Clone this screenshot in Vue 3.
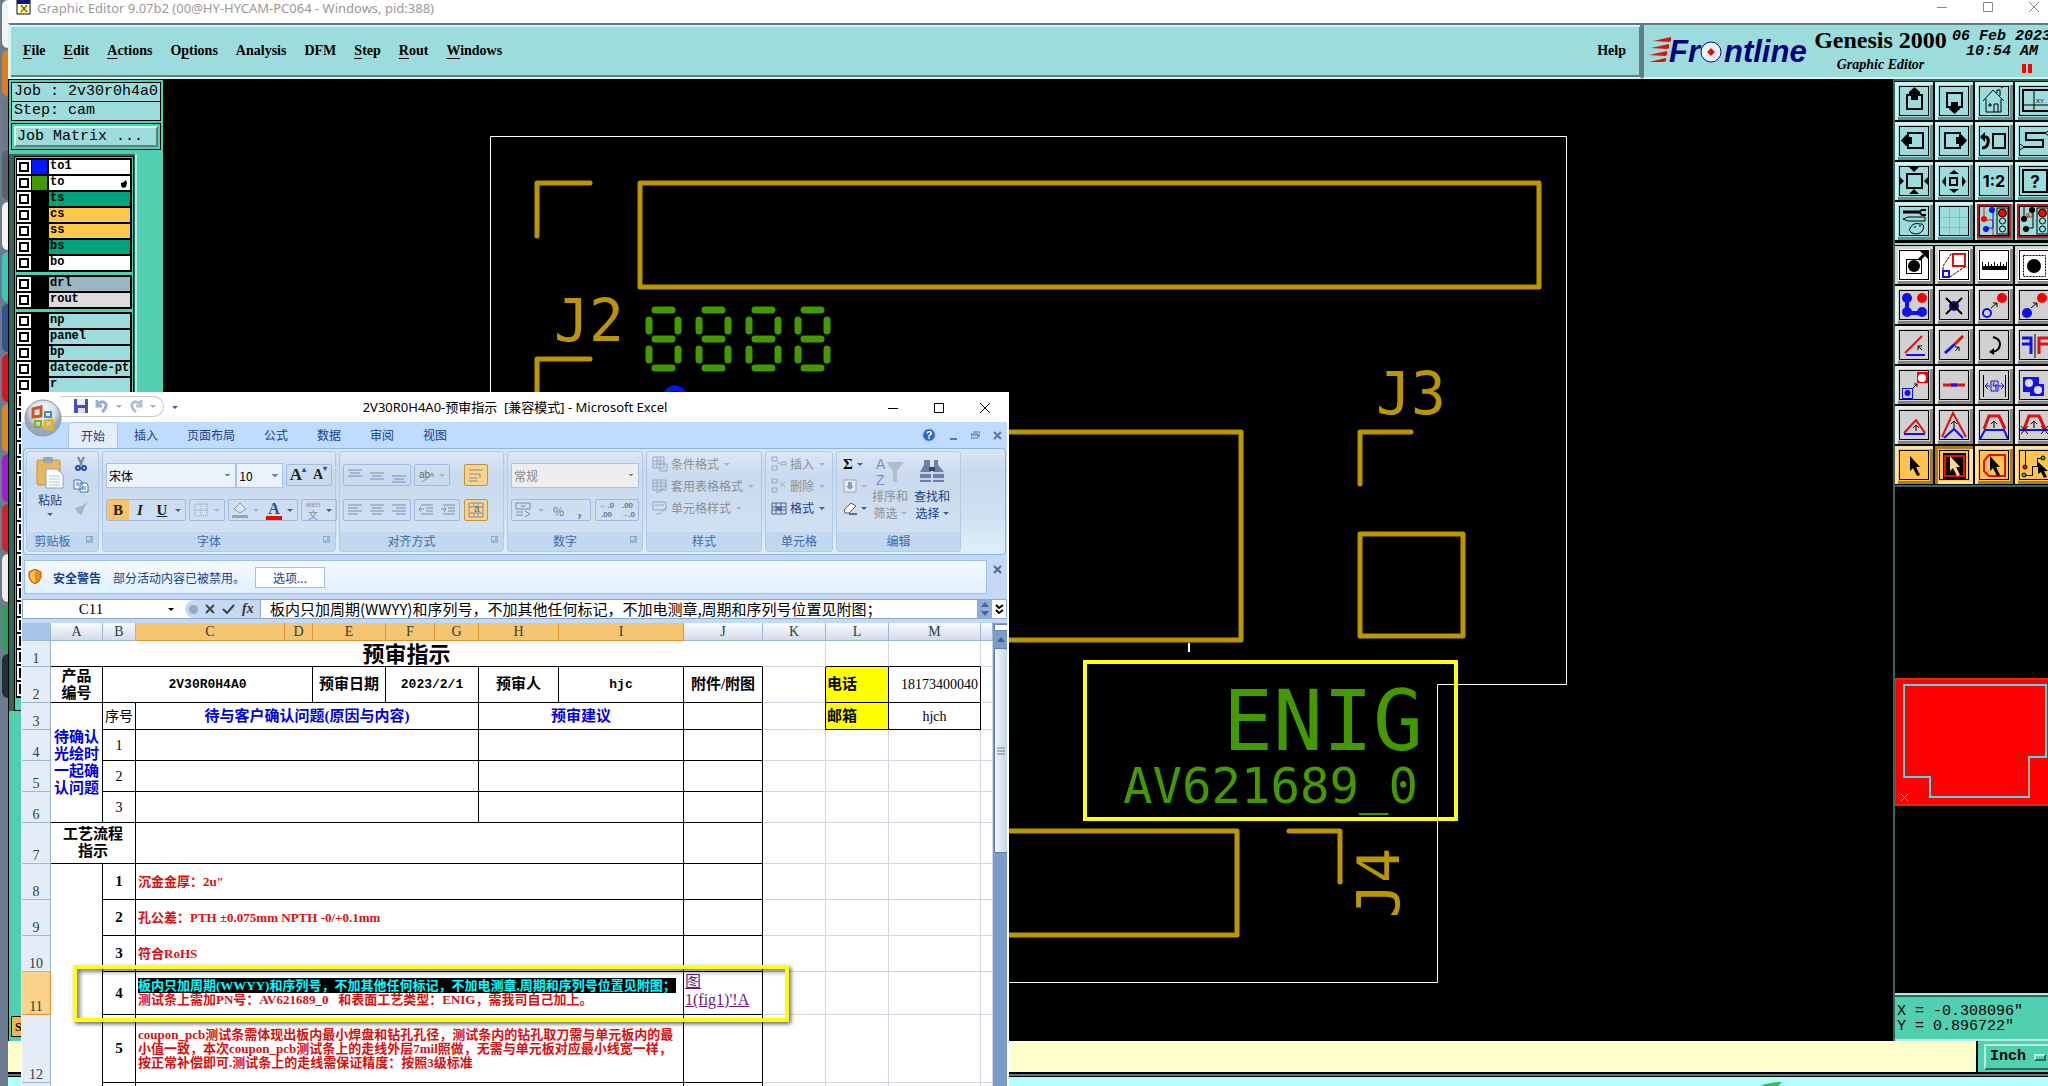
<script setup>
const menus = [
  ['F', 'ile', ''], ['E', 'dit', ''], ['A', 'ctions', ''], ['p', 'tions', 'O'], ['', 'Analysis', ''],
  ['', 'DFM', ''], ['S', 'tep', ''], ['R', 'out', ''], ['W', 'indows', ''],
]

const strip = [
  ['#f4f4f4', 48], ['#dd7f1c', 46], ['#6f7683', 50], ['#59636b', 50], ['#f3f3f3', 48], ['#35c9b9', 50],
  ['#34508f', 48], ['#d8161f', 48], ['#d98a1c', 48], ['#a11cd0', 48], ['#cf2430', 48], ['#f0eee8', 48],
  ['#2f9e63', 48], ['#20303a', 44],
]

const white = '#ffffff', green = '#00a47c', amber = '#ffc64c', aqua = '#9cdcdc'
const layerGroups = [
  [
    { n: 'to1', bg: white, c: '#0018ff' }, { n: 'to', bg: white, c: '#449900', hand: true },
    { n: 'ts', bg: green }, { n: 'cs', bg: amber }, { n: 'ss', bg: amber }, { n: 'bs', bg: green }, { n: 'bo', bg: white },
  ],
  [{ n: 'drl', bg: '#9cb6be' }, { n: 'rout', bg: '#dcdcdc' }],
  [
    { n: 'np', bg: aqua }, { n: 'panel', bg: aqua }, { n: 'bp', bg: aqua }, { n: 'datecode-pto', bg: aqua }, { n: 'r', bg: aqua },
    ...Array.from({ length: 19 }, () => ({ n: '', bg: aqua })),
  ],
]

const K = 'fill="none" stroke="#000" stroke-width="2"'
const T = 'fill="none" stroke="#000"'
const R = 'fill="none" stroke="#e01010" stroke-width="2"'
const B = 'fill="none" stroke="#1010f0" stroke-width="2"'
const light = (ink) => `
  <rect x="22" y="6" width="11" height="26" ${T}/><circle cx="27.5" cy="11" r="4" fill="#f00" stroke="#000"/>
  <circle cx="27.5" cy="19" r="3" ${T}/><circle cx="27.5" cy="27" r="3" ${T}/>
  <path d="M18 8V26H12" fill="none" stroke="${ink}"/><circle cx="17" cy="8" r="3" fill="${ink}"/>
  <circle cx="11" cy="27" r="3" fill="${ink}"/>`
const pointer = 'M15 10V25L18 22L22 30L25 29L21 21H25Z'

const viewTools = [
  { t: 'Pan up', s: `<rect x="12" y="13" width="15" height="14" ${K}/><path d="M19.5 5L25 10V13H23V18H16V13H14V10Z"/>` },
  { t: 'Pan down', s: `<rect x="12" y="11" width="15" height="14" ${K}/><path d="M19.5 32L25 27V25H23V20H16V25H14V27Z"/>` },
  { t: 'Home', s: `<path d="M8 19L18 8L29 19M11 17V30H26V17M14 22H16V24H14ZM19 30V22H23V30M22 11V8H25V14M26 6L28 5" ${T}/>` },
  { t: 'Window XY', s: `<rect x="8" y="8" width="26" height="21" ${K}/><path d="M19 8V29M8 23H34" ${T}/><text x="21" y="21" font-size="6" font-family="Liberation Sans">XY</text>` },
  { t: 'Pan left', s: `<rect x="13" y="11" width="15" height="15" ${K}/><path d="M6 18.5L11 13H12V15H17V22H12V24H11Z"/>` },
  { t: 'Pan right', s: `<rect x="10" y="11" width="15" height="15" ${K}/><path d="M32 18.5L27 13H26V15H21V22H26V24H27Z"/>` },
  { t: 'Previous view', s: `<rect x="18" y="12" width="12" height="14" ${K}/><path d="M8 15H11Q14 16 13 21Q12 26 7 26" fill="none" stroke="#000" stroke-width="3"/><path d="M5 15L10 10V20Z"/>` },
  { t: 'Serpentine', s: `<path d="M8 25H28V18H11V11H30" ${K}/><path d="M5 22L9 25L5 28M35 8L30 11L34 14" ${T}/>` },
  { t: 'Zoom in', s: `<rect x="12" y="12" width="15" height="14" ${K}/><path d="M14 5H24L19 10ZM14 32H24L19 27ZM4 14V24L9 19ZM34 14V24L29 19Z"/>` },
  { t: 'Zoom out', s: `<rect x="15" y="16" width="7" height="7" ${K}/><path d="M19 8L24 12H14ZM19 31L24 27H14ZM7 19.5L11 14V25ZM31 19.5L27 14V25Z"/>` },
  { t: 'Scale', s: `<text x="19" y="25" text-anchor="middle" font-size="16" font-weight="bold" font-family="Inter">1:2</text>` },
  { t: 'Query', s: `<rect x="8" y="8" width="24" height="22" ${K}/><text x="20" y="26" text-anchor="middle" font-size="17" font-weight="bold" font-family="Inter">?</text>` },
  { t: 'Settings', s: `<path d="M8 10H24" stroke="#000" stroke-width="3"/><path d="M31 8H27L24 10L27 13H31" ${K}/><path d="M8 17L13 15H30V19H13ZM15 26Q18 20 25 22Q30 21 28 28Q24 34 17 31Q13 29 15 26M19 25H21M24 24H26" ${T}/>` },
  { t: 'Grid', s: `<path d="M14.5 5V33M24.5 5V33M5 15.5H33M5 25.5H33" fill="none" stroke="#b9a6b0"/>` },
  { t: 'Net check', c: 'hot', s: `<path d="M9 4V18H18V33" fill="none" stroke="#e01010"/><circle cx="9" cy="17" r="3" fill="#f00"/>${light('#1010f0')}` },
  { t: 'Online check', c: 'hot', s: `<path d="M9 15H17M12 11V15M14 11V15M17 11V15" fill="none" stroke="#e01010"/><path d="M9 5V18" ${T}/><circle cx="9" cy="17" r="3"/>${light('#000')}` },
]
const editTools = [
  { t: 'Select', c: 'w', s: `<rect x="11.5" y="13.5" width="15" height="14" ${T}/><circle cx="19" cy="20" r="6"/><path d="M24 14L29 9" stroke="#000" stroke-width="3"/><path d="M25 5H33V13Z"/>` },
  { t: 'Resize', c: 'w', s: `<rect x="18" y="8" width="12" height="12" ${R}/><rect x="8" y="25" width="6" height="6" ${B}/><path d="M8 24V20L17 7M15 31L31 20" ${T} stroke-dasharray="3 1"/>` },
  { t: 'Measure', c: 'w', s: `<path d="M7 24V16H8V20H10V18H11V20H13V16H14V20H16V18H17V20H19V16H20V20H22V18H23V20H25V16H26V20H28V18H29V20H31V16H32V24Z"/>` },
  { t: 'Area', c: 'w', s: `<rect x="8.5" y="9.5" width="22" height="21" ${T} stroke-dasharray="2 1"/><circle cx="19" cy="20" r="7"/>` },
  { t: 'Add pad', s: `<path d="M12 11V27H26" fill="none" stroke="#11e" stroke-width="4"/><circle cx="12" cy="12" r="5" fill="#11e"/><circle cx="12" cy="26" r="5" fill="#11e"/><circle cx="27" cy="26" r="5" fill="#11e"/><circle cx="27" cy="12" r="5" fill="#f00"/>` },
  { t: 'Delete', s: `<circle cx="19" cy="20" r="5" fill="#11a"/><path d="M11 12L27 28M27 12L11 28" ${K}/>` },
  { t: 'Move', s: `<circle cx="12" cy="27" r="4" ${B}/><circle cx="27" cy="12" r="5" fill="#f00"/><path d="M16 22L22 17M18 17H22V21" ${T}/>` },
  { t: 'Copy', s: `<circle cx="12" cy="27" r="5" fill="#11e"/><circle cx="27" cy="12" r="5" fill="#f00"/><path d="M16 22L22 17M18 17H22V21" ${T}/>` },
  { t: 'Angle', s: `<path d="M10 27L27 10" ${R}/><path d="M11 29H30" ${B}/><path d="M27 24L23 20M23 24V20H27" ${T}/>` },
  { t: 'Line', s: `<path d="M20 18L28 10" stroke="#e01010" stroke-width="3"/><path d="M10 27L20 18" stroke="#11e" stroke-width="3"/><path d="M20 25L24 21M20 21H24V25" ${T}/>` },
  { t: 'Rotate', s: `<path d="M18 11Q25 13 25 18Q25 24 18 26" ${K}/><path d="M14 26L19 22V29Z"/>` },
  { t: 'Mirror', s: `<path d="M7 12H16V28M7 18H16" fill="none" stroke="#11e" stroke-width="3"/><path d="M33 12H24V28M33 18H24" fill="none" stroke="#e01010" stroke-width="3"/><path d="M20 8V32" ${T}/>` },
  { t: 'Substitute', s: `<rect x="22" y="6" width="11" height="11" fill="#f00"/><circle cx="27" cy="12" r="4" fill="#fff"/><rect x="7.5" y="22.5" width="10" height="10" fill="none" stroke="#11e"/><circle cx="12.5" cy="27" r="3" fill="#11e"/><path d="M18 22L22 18M19 18H22V21" ${T}/>` },
  { t: 'Connect', s: `<path d="M8 19H30" stroke="#e01010" stroke-width="3"/><path d="M16 19H22" stroke="#11e" stroke-width="3"/>` },
  { t: 'Spacing', s: `<path d="M8.5 9V31M30.5 9V31" ${T}/><path d="M10 20H15M29 20H23M13 17L10 20L13 23M26 17L29 20L26 23M16 15H23V25H16ZM19 16L18 20H22M21 18V24" fill="none" stroke="#11e"/>` },
  { t: 'Surface', s: `<path d="M8 11H24V18H29V30H15V26H8Z" fill="#11e"/><circle cx="14" cy="17" r="4" fill="#ddd"/><circle cx="23" cy="24" r="4" fill="#ddd"/>` },
  { t: 'Triangle', s: `<path d="M9 27L21 14L30 27" ${R}/><path d="M9 28H30" ${B}/><path d="M21 25V19M18 22L21 19L24 22" ${T}/>` },
  { t: 'Peak', s: `<path d="M7 31L18 7L31 31" ${R}/><path d="M9 32L19 23L28 32" ${B}/><path d="M19 22V15M16 18L19 15L22 18" ${T}/>` },
  { t: 'Bridge', s: `<path d="M9 23L14 10H24L30 23" fill="none" stroke="#e01010" stroke-width="3"/><path d="M5 33L10 24H29L33 33" ${B}/><path d="M19 22V15M16 18L19 15L22 18" ${T}/>` },
  { t: 'Bridge cut', s: `<path d="M9 23L14 10H24L30 23" fill="none" stroke="#e01010" stroke-width="3"/><path d="M5 24H33" ${B}/><path d="M6 20L13 28M13 20L6 28M26 20L33 28M33 20L26 28M19 22V15M16 18L19 15L22 18" ${T}/>` },
  { t: 'Pick', c: 'y', s: `<path d="${pointer}"/>` },
  { t: 'Pick in frame', c: 'y on', s: `<rect x="8" y="7" width="23" height="26"/><rect x="10" y="10" width="19" height="20" ${R}/><path d="${pointer}" fill="#ffd98a"/>` },
  { t: 'Pick polygon', c: 'y', s: `<path d="M9 15L14 9H30V30H14L9 25Z" ${R}/><path d="${pointer}"/>` },
  { t: 'Pick net', c: 'y', s: `<path d="M10.5 5V20M10 29.5H17.5V20.5H22.5V12.5H28" ${T}/><circle cx="10" cy="21" r="2" fill="#f00" stroke="#000"/><circle cx="9" cy="29" r="2" fill="#3c3" stroke="#000"/><circle cx="28" cy="12" r="2" fill="#3c3" stroke="#000"/><path transform="translate(8 6)" d="M15 10V22L18 20L21 26L24 25L21 19H25Z"/>` },
]

const digits = [0, 50, 100, 149]
const tabs = ['开始', '插入', '页面布局', '公式', '数据', '审阅', '视图']
const cols = [
  ['A', 52], ['B', 33], ['C', 149], ['D', 28], ['E', 73], ['F', 49], ['G', 44],
  ['H', 80], ['I', 125], ['J', 79], ['K', 63], ['L', 63], ['M', 92], ['', 12],
]
const alignTop = ['M3 5H17M5 8H15M3 11H17', 'M3 8H17M5 11H15M3 14H17', 'M3 11H17M5 14H15M3 17H17']
const alignText = ['M3 5H17M3 8H13M3 11H17M3 14H13', 'M3 5H17M5 8H15M3 11H17M5 14H15', 'M3 5H17M7 8H17M3 11H17M7 14H17']
const indent = ['M5 5H17M10 8H17M10 11H17M5 14H17M8 9H3M5 7L3 9L5 12', 'M5 5H17M10 8H17M10 11H17M5 14H17M3 9H8M6 7L8 9L6 12']
</script>

<template>
  <div class="desktop">
    <aside class="dock">
      <i v-for="(s, i) in strip" :key="i" :style="{ background: s[0], height: s[1] + 'px' }"></i>
    </aside>

    <section class="genesis">
      <header class="gtitle">
        <svg class="gico" viewBox="0 0 15 15"><rect x="1" y="0" width="13" height="14" fill="#fff" stroke="#111" /><rect x="1" y="0" width="13" height="4" fill="#117" /><rect x="4" y="5" width="8" height="8" fill="#ffee70" /><path d="M5 5L11 12M11 5L5 12" stroke="#222" /></svg>
        <span>Graphic Editor 9.07b2 (00@HY-HYCAM-PC064 - Windows, pid:388)</span>
        <div class="caps">
          <button aria-label="Minimize"><svg viewBox="0 0 12 12"><path d="M1 6.5H11" /></svg></button>
          <button aria-label="Maximize"><svg viewBox="0 0 12 12"><path d="M1.5 1.5H10.5V10.5H1.5Z" /></svg></button>
          <button aria-label="Close"><svg viewBox="0 0 12 12"><path d="M1 1L11 11M11 1L1 11" /></svg></button>
        </div>
      </header>

      <div class="top">
        <nav class="menubar">
          <button v-for="m in menus" :key="m[1]">{{ m[2] }}<u>{{ m[0] }}</u>{{ m[1] }}</button>
          <button class="help">Help</button>
        </nav>
        <div class="brand">
          <svg class="logo" width="164" height="38" viewBox="0 0 164 38">
            <path d="M4 7L22 3V7L20 8ZM2 14L20 10V14L18 15ZM0 21L18 17V21L16 22ZM0 28L17 24V27L15 28Z" fill="#e01010" />
            <text x="20" y="28" class="lg">Fr</text>
            <circle cx="62" cy="18" r="10" fill="#e8f4fa" stroke="#101080" />
            <path d="M62 14L66 18L62 22L58 18Z" fill="#e01010" />
            <text x="75" y="28" class="lg">ntline</text>
          </svg>
          <div class="prod"><b>Genesis 2000</b><em>Graphic Editor</em></div>
          <div class="date"><span>06 Feb 2023</span><span class="tm">10:54 AM</span><svg width="10" height="9"><path d="M0 0H4V9H0ZM6 0H10V9H6Z" fill="#f00" /></svg></div>
        </div>
      </div>

      <div class="work">
        <aside class="left">
          <div class="job">Job : 2v30r0h4a0</div>
          <div class="job step">Step: cam</div>
          <div class="jm"><button>Job Matrix ...</button></div>
          <div class="layers">
            <div class="list">
              <div v-for="(g, gi) in layerGroups" :key="gi" class="lgrp">
                <div v-for="(l, li) in g" :key="li" class="layer">
                  <input type="checkbox" :aria-label="l.n || 'layer'" />
                  <i :style="{ background: l.c || '#000' }"></i>
                  <span :style="{ background: l.bg }">{{ l.n }}<svg v-if="l.hand" width="7" height="8"><path d="M0 3L3 2L5 0L6 3L5 7L2 8L0 6Z" /></svg></span>
                </div>
              </div>
            </div>
          </div>
          <button class="sbtn">S</button>
        </aside>

        <main class="canvas">
          <svg class="board" viewBox="163 79 1730 962" preserveAspectRatio="xMinYMin slice">
            <g fill="none" stroke="#fff"><path d="M490.5 400V136.5H1566.5V684.5H1437.5V982.5H1000" /><path d="M1189 643V652" stroke-width="2" /></g>
            <g fill="none" stroke="#ba9600" stroke-width="5" stroke-linecap="round" stroke-linejoin="round">
              <path d="M537 236V183H590M537 400V359H590M640 183H1539V287H640ZM1360 484V432H1411M1360 534H1463V636H1360ZM1000 432H1241V640H1000M1000 831H1237V935H1000M1289 831H1340V882" />
            </g>
            <g class="cad gold">
              <text x="554" y="341">J2</text><text x="1376" y="414">J3</text><text transform="translate(1399 918) rotate(-90)">J4</text>
            </g>
            <g stroke="#449900" stroke-width="7" stroke-linecap="round" fill="none">
              <path v-for="d in digits" :key="d" :transform="`translate(${d} 0)`" d="M655 310H672M655 339H672M655 368H672M649 320V331M678 320V331M649 349V360M678 349V360" />
            </g>
            <circle cx="675" cy="398" r="10" fill="none" stroke="#0018ff" stroke-width="5" />
            <g class="cad grn"><text class="big" x="1423" y="750" text-anchor="end">ENIG</text><text class="part" x="1418" y="803" text-anchor="end">AV621689_0</text></g>
            <rect x="1085" y="662" width="371" height="157" fill="none" stroke="#ff1" stroke-width="4" />
          </svg>
        </main>

        <aside class="right">
          <div class="tools"><button v-for="b in viewTools" :key="b.t" :class="b.c" :title="b.t" :aria-label="b.t"><svg viewBox="0 0 38 38"><rect x="4.5" y="4.5" width="29" height="29" fill="none" stroke="#000" /><g v-html="b.s"></g></svg></button></div>
          <div class="tools edit"><button v-for="b in editTools" :key="b.t" :class="b.c" :title="b.t" :aria-label="b.t"><svg viewBox="0 0 38 38"><rect x="4.5" y="4.5" width="29" height="29" fill="none" stroke="#000" /><g v-html="b.s"></g></svg></button></div>
          <div class="over">
            <svg width="156" height="128" viewBox="0 0 156 128"><rect width="156" height="128" fill="#f00" /><path d="M156 1H0V127H156" fill="none" stroke="#b05c10" /><path d="M9 7H151V79H134V119H35V99H9Z" fill="none" stroke="#4adcdc" stroke-width="2" /><path d="M134 80V118" stroke="#aaa" stroke-width="2" /><path d="M6 116L13 123M13 116L6 123" stroke="#ccc" /></svg>
          </div>
          <div class="coord"><span>X = -0.308096"</span><span>Y = 0.896722"</span></div>
        </aside>
      </div>

      <footer class="cmd">
        <input aria-label="Command" />
        <div class="unit"><button>Inch<i></i></button></div>
      </footer>
      <div class="foot"><svg width="24" height="4"><path d="M0 4Q10 0 22 0L18 4Z" fill="#3fbf4a" /></svg></div>
    </section>

    <section class="excel">
      <header class="xtitle">
        <svg class="orb" width="38" height="38" viewBox="0 0 38 38">
          <defs><radialGradient id="o" cy=".3"><stop offset="0" stop-color="#fff" /><stop offset=".7" stop-color="#d5dce6" /><stop offset="1" stop-color="#9aa8bb" /></radialGradient></defs>
          <circle cx="19" cy="19" r="18" fill="url(#o)" stroke="#8695aa" />
          <g fill="none" stroke-width="3"><path d="M9 10L17 8V17L9 18Z" stroke="#d8501c" /><path d="M21 13H27V18H21Z" stroke="#3e8fd0" stroke-width="2" /><path d="M11 22H17V28H11Z" stroke="#7db32d" stroke-width="2" /><path d="M21 22L28 21V30L21 29Z" stroke="#efb310" /></g>
        </svg>
        <div class="qat">
          <button aria-label="Save"><svg width="14" height="14"><path d="M0 0H14V14H0Z" fill="#4a4fb5" /><path d="M3 0H11V6H3Z" fill="#eef" /><path d="M4 9H11V14H4Z" fill="#dde" /></svg></button>
          <button aria-label="Undo"><svg width="14" height="14" fill="none" stroke="#9aaed0" stroke-width="3"><path d="M2 1V7H7M2 6Q8 0 11 5Q12 9 7 13" /></svg></button><s></s>
          <button aria-label="Redo"><svg width="14" height="14" fill="none" stroke="#b3bfd4" stroke-width="3"><path d="M12 1V7H7M12 6Q6 0 3 5Q2 9 7 13" /></svg></button><s></s>
        </div>
        <s class="more"></s>
        <h1>2V30R0H4A0-预审指示&nbsp; [兼容模式] - Microsoft Excel</h1>
        <div class="caps dark">
          <button aria-label="Minimize"><svg viewBox="0 0 12 12"><path d="M1 6.5H11" /></svg></button>
          <button aria-label="Maximize"><svg viewBox="0 0 12 12"><path d="M1.5 1.5H10.5V10.5H1.5Z" /></svg></button>
          <button aria-label="Close"><svg viewBox="0 0 12 12"><path d="M1 1L11 11M11 1L1 11" /></svg></button>
        </div>
      </header>

      <nav class="tabs">
        <button v-for="(t, i) in tabs" :key="t" :class="{ act: i === 0 }">{{ t }}</button>
        <div class="tr">
          <svg width="14" height="14"><circle cx="7" cy="7" r="6" fill="#2f62c8" stroke="#7fa2dd" /><text x="7" y="11" text-anchor="middle" font-size="11" font-weight="bold" fill="#fff">?</text></svg>
          <svg width="9" height="12"><path d="M1 10H8" stroke="#66768c" stroke-width="2" /></svg>
          <svg width="9" height="12"><path d="M2 3H9V7H7M0 5H7V9H0ZM0 6H7" fill="none" stroke="#66768c" /></svg>
          <svg width="9" height="12"><path d="M1 3L8 10M8 3L1 10" stroke="#66768c" stroke-width="2" /></svg>
        </div>
      </nav>

      <div class="ribbon">
        <div class="grp clip">
          <div class="body">
            <button class="tall"><svg width="28" height="32"><rect x="1" y="3" width="23" height="25" rx="2" fill="#e8b860" stroke="#c79036" /><rect x="7" y="0" width="10" height="6" rx="2" fill="#9aa3b0" /><path d="M10 12H21L27 18V31H10Z" fill="#fff" stroke="#8aa0c0" /><path d="M13 19H24M13 22H24M13 25H24M13 28H24" stroke="#b3c3dd" /></svg><span>粘贴</span><s></s></button>
            <div class="stack">
              <button aria-label="Cut"><svg width="16" height="16" fill="none"><path d="M5 1L9 9M11 1L7 9" stroke="#77859c" stroke-width="2" /><circle cx="5" cy="12" r="2" stroke="#2b4f9e" stroke-width="2" /><circle cx="11" cy="12" r="2" stroke="#2b4f9e" stroke-width="2" /></svg></button>
              <button aria-label="Copy"><svg width="16" height="16" fill="#fff" stroke="#3f68b5"><path d="M1 2H7L9 4V11H1ZM7 5H13L15 7V14H7Z" /><path d="M3 5H6M3 7H6M9 9H13M9 11H13" /></svg></button>
              <button aria-label="Format painter"><svg width="16" height="16"><path d="M15 1L9 6L2 8Q4 13 8 15Q11 11 11 8Z" fill="#a9b4c2" /></svg></button>
            </div>
          </div>
          <div class="cap lau">剪贴板<em></em></div>
        </div>

        <div class="grp font">
          <div class="body rows">
            <div class="row"><select class="f1" aria-label="Font"><option>宋体</option></select><select class="f2" aria-label="Size"><option>10</option></select>
              <div class="bx"><button class="A1">A<sup>▴</sup></button><button class="A2">A<sup>▾</sup></button></div></div>
            <div class="row"><div class="bx"><button class="on bb">B</button><button class="bb it">I</button><button class="bb un">U</button><s></s></div>
              <div class="bx"><button aria-label="Borders"><svg width="20" height="20"><path d="M4 4H17M4 10H17M4 16H17M4 4V16M10 4V16M16 4V16" stroke="#8fa3c4" stroke-dasharray="1 1" /></svg></button><s class="g"></s></div>
              <div class="bx"><button aria-label="Fill"><svg width="20" height="20"><path d="M4 9L10 3L16 9L10 13Z" fill="#dce6f3" stroke="#8698b5" /><path d="M2 15H18V18H2Z" fill="#a0a0a0" stroke="none" /></svg></button><s class="g"></s><button class="fc">A</button><s></s></div>
              <div class="bx"><button class="wen"><span>wén</span><span class="zi">文</span></button><s></s></div></div>
          </div>
          <div class="cap lau">字体<em></em></div>
        </div>

        <div class="grp align">
          <div class="body rows">
            <div class="row"><div class="bx"><button v-for="p in alignTop" :key="p" aria-label="Vertical align"><svg width="20" height="20"><path :d="p" /></svg></button></div>
              <div class="bx"><button aria-label="Orientation"><svg width="20" height="20"><text x="3" y="13" class="ori">ab</text><path d="M6 17L17 9M14 9H17V12" /></svg></button><s class="g"></s></div>
              <div class="bx gold end"><button aria-label="Wrap"><svg width="20" height="20"><path d="M3 5H17M3 9H14M3 13H12M14 9V13M3 16H12" /></svg></button></div></div>
            <div class="row"><div class="bx"><button v-for="p in alignText" :key="p" aria-label="Align"><svg width="20" height="20"><path :d="p" /></svg></button></div>
              <div class="bx"><button v-for="p in indent" :key="p" aria-label="Indent"><svg width="20" height="20"><path :d="p" /></svg></button></div>
              <div class="bx gold end"><button aria-label="Merge"><svg width="20" height="20"><path d="M3 3H17V17H3ZM3 7H17M3 13H17M8 3V7M12 3V7M8 13V17M12 13V17" /><text x="8" y="12" class="ori">a</text></svg></button></div></div>
          </div>
          <div class="cap lau">对齐方式<em></em></div>
        </div>

        <div class="grp num">
          <div class="body rows">
            <div class="row"><select class="f3" aria-label="Number format"><option>常规</option></select></div>
            <div class="row spread"><div class="bx"><button aria-label="Currency"><svg width="20" height="20"><path d="M3 3H17V9H3ZM8 6H12M3 12H10M3 15H10M12 11L17 14L12 17" /></svg></button><s class="g"></s><button class="pc">%</button><button class="pc"><b>,</b></button></div>
              <div class="bx"><button class="dec">←.0<br />.00</button><button class="dec">.00<br />→.0</button></div></div>
          </div>
          <div class="cap lau">数字<em></em></div>
        </div>

        <div class="grp sty">
          <div class="body lst">
            <button><svg width="16" height="16"><path d="M1 1H12V12H1ZM1 5H12M1 8H12M5 1V12M8 1V12M8 8H15V15H8Z" /></svg>条件格式<s class="g"></s></button>
            <button><svg width="16" height="16"><path d="M1 2H14V12H1ZM1 5H14M1 8H14M5 2V12M9 2V12M15 6L8 14H4" /></svg>套用表格格式<s class="g"></s></button>
            <button><svg width="16" height="16"><path d="M1 2H14V10H1ZM3 5H12M15 6L8 14H4" /></svg>单元格样式<s class="g"></s></button>
          </div>
          <div class="cap">样式</div>
        </div>

        <div class="grp cell">
          <div class="body lst">
            <button><svg width="16" height="16"><path d="M1 1H6V5H1ZM1 10H6V14H1ZM10 6H15V9H10ZM9 7H6" /></svg>插入<s class="g"></s></button>
            <button><svg width="16" height="16"><path d="M1 1H6V5H1ZM1 10H6V14H1ZM9 4L14 9M14 4L9 9" /></svg>删除<s class="g"></s></button>
            <button class="en"><svg width="16" height="16"><path d="M1 3H15V14H1ZM1 7H15M1 10H15M5 3V14M10 3V14" /><path d="M6 7H10V10H6Z" fill="#4b7bd0" /></svg>格式<s></s></button>
          </div>
          <div class="cap">单元格</div>
        </div>

        <div class="grp ed">
          <div class="body">
            <div class="stack sm">
              <button class="sig">Σ<s></s></button>
              <button aria-label="Fill down"><svg width="14" height="14"><path d="M1 1H13V13H1Z" fill="#e6ecf4" stroke="#9aa8bd" /><path d="M5 3H9V7H11L7 11L3 7H5Z" fill="#8b9cba" /></svg><s class="g"></s></button>
              <button aria-label="Clear"><svg width="14" height="14"><path d="M1 9L8 2L13 5L6 12H2Z" fill="#fff" stroke="#556" /><path d="M6 13H14" stroke="#000" /></svg><s></s></button>
            </div>
            <button class="tall offt"><svg width="30" height="30"><text x="1" y="12" class="az">A</text><text x="1" y="28" class="az">Z</text><path d="M11 5H29L22 14V25H18V14Z" fill="#b3bcc9" /></svg><span>排序和</span><span>筛选<s class="g"></s></span></button>
            <button class="tall"><svg width="30" height="30"><path d="M9 3H13V9L14 14V25H3V15L7 8V3ZM17 3H21V8L27 15V25H16V14L17 9Z" fill="#6b7fa8" /><path d="M3 16H14M16 16H27M3 22H14M16 22H27" stroke="#c5d3ea" stroke-width="2" /><path d="M12 10H18V14H12Z" fill="#34456e" /></svg><span>查找和</span><span>选择<s></s></span></button>
          </div>
          <div class="cap">编辑</div>
        </div>
      </div>

      <div class="sec">
        <div class="msg">
          <svg width="14" height="16"><path d="M7 0L13 3V8Q12 13 7 15Q2 13 1 8V3Z" fill="#f08a1c" stroke="#b4510c" /><path d="M7 1V14Q3 12 2 8V4Z" fill="#ffc04a" /></svg>
          <b>安全警告</b><span>部分活动内容已被禁用。</span><button>选项...</button>
        </div>
        <svg width="9" height="9"><path d="M1 1L8 8M8 1L1 8" stroke="#5a6a80" stroke-width="2" /></svg>
      </div>

      <div class="fbar">
        <input value="C11" aria-label="Name box" /><s class="blk"></s>
        <div class="fx"><i></i>
          <svg width="10" height="10"><path d="M1 1L9 9M9 1L1 9" stroke="#444" stroke-width="2" /></svg>
          <svg width="13" height="10"><path d="M1 5L5 9L12 1" fill="none" stroke="#444" stroke-width="2" /></svg><em>fx</em></div>
        <div class="ftxt">板内只加周期(WWYY)和序列号，不加其他任何标记，不加电测章,周期和序列号位置见附图；</div>
        <div class="spin"><s></s><s></s></div>
        <button class="exp" aria-label="Expand"><svg width="9" height="11" fill="none" stroke="#000" stroke-width="2"><path d="M1 1L4 4L8 1M1 6L4 9L8 6" /></svg></button>
      </div>

      <div class="sheet">
        <table>
          <colgroup><col class="rh" /><col v-for="(c, i) in cols" :key="i" :style="{ width: c[1] + 'px' }" /></colgroup>
          <thead><tr><th class="corner"></th><th v-for="(c, i) in cols" :key="i" :class="{ sel: i > 1 && i < 9 }">{{ c[0] }}</th></tr></thead>
          <tbody>
            <tr class="h26"><th>1</th><td colspan="10" class="k0 title">预审指示</td><td></td><td class="bk"></td><td class="bk"></td><td></td></tr>
            <tr class="h36"><th>2</th><td class="k b">产品<br />编号</td><td colspan="3" class="k b mn">2V30R0H4A0</td><td class="k b">预审日期</td><td colspan="2" class="k b mn">2023/2/1</td><td class="k b">预审人</td><td class="k b mn">hjc</td><td class="k b">附件/附图</td><td class="rk"></td><td class="k b yel">电话</td><td class="k tel">18173400040</td><td></td></tr>
            <tr class="h27"><th>3</th><td rowspan="4" class="k b blue">待确认<br />光绘时<br />一起确<br />认问题</td><td class="k">序号</td><td colspan="5" class="k b blue">待与客户确认问题(原因与内容)</td><td colspan="2" class="k b blue">预审建议</td><td class="k"></td><td class="rk"></td><td class="k b yel">邮箱</td><td class="k">hjch</td><td></td></tr>
            <tr v-for="n in 3" :key="n" class="h31"><th>{{ n + 3 }}</th><td class="k">{{ n }}</td><td colspan="5" class="k"></td><td colspan="2" class="k"></td><td class="k"></td><td></td><td></td><td></td><td></td></tr>
            <tr class="h41"><th>7</th><td colspan="2" class="k b">工艺流程<br />指示</td><td colspan="7" class="k"></td><td class="k"></td><td></td><td></td><td></td><td></td></tr>
            <tr class="h36"><th>8</th><td rowspan="6" class="k"></td><td class="k b">1</td><td colspan="7" class="k red">沉金金厚：2u″</td><td class="k"></td><td></td><td></td><td></td><td></td></tr>
            <tr class="h36"><th>9</th><td class="k b">2</td><td colspan="7" class="k red">孔公差：PTH ±0.075mm NPTH -0/+0.1mm</td><td class="k"></td><td></td><td></td><td></td><td></td></tr>
            <tr class="h36"><th>10</th><td class="k b">3</td><td colspan="7" class="k red">符合RoHS</td><td class="k"></td><td></td><td></td><td></td><td></td></tr>
            <tr class="h43"><th class="sel">11</th><td class="k b">4</td><td colspan="7" class="k red"><mark>板内只加周期(WWYY)和序列号，不加其他任何标记，不加电测章,周期和序列号位置见附图；</mark><br />测试条上需加PN号：AV621689_0&nbsp;&nbsp; 和表面工艺类型：ENIG，需我司自己加上。</td><td class="k lnk"><a href="#fig1">图<br />1(fig1)'!A</a></td><td></td><td></td><td></td><td></td></tr>
            <tr class="h68"><th>12</th><td class="k b">5</td><td colspan="7" class="k red">coupon_pcb测试条需体现出板内最小焊盘和钻孔孔径，测试条内的钻孔取刀需与单元板内的最<br />小值一致，本次coupon_pcb测试条上的走线外层7mil照做，无需与单元板对应最小线宽一样，<br />按正常补偿即可.测试条上的走线需保证精度：按照3级标准</td><td class="k"></td><td></td><td></td><td></td><td></td></tr>
            <tr class="h36"><th></th><td class="k"></td><td colspan="7" class="k"></td><td class="k"></td><td></td><td></td><td></td><td></td></tr>
          </tbody>
        </table>
        <div class="sb"><i class="split"></i><i class="up"><s></s></i><i class="thumb"><svg width="8" height="8"><path d="M0 1H8M0 4H8M0 7H8" stroke="#6a7c98" /></svg></i></div>
      </div>
      <div class="hl"></div>
    </section>
  </div>
</template>

<style>
body { margin: 0; overflow: hidden; }
</style>

<style scoped>
* { box-sizing: border-box; }
button { font: inherit; color: inherit; border: 0; background: none; padding: 0; margin: 0; white-space: nowrap; }
svg { display: block; flex: none; }
.desktop { position: relative; display: flex; height: 100vh; overflow: hidden; background: #66758a; font-family: "Noto Sans", "Noto Sans CJK SC", sans-serif; }
.dock { width: 8px; flex: none; display: flex; flex-direction: column; gap: 2px; padding-left: 2px; background: #6c7b90; }
.dock i { display: block; border-radius: 6px 0 0 6px; flex: none; }
.genesis { flex: 1; min-width: 0; display: flex; flex-direction: column; background: #000; }
.gtitle { height: 23px; flex: none; background: #fff; display: flex; align-items: flex-start; padding-left: 8px; gap: 6px; font: 13px/16px "Noto Sans", sans-serif; color: #999; }
.gico { width: 15px; height: 15px; }
.caps { margin-left: auto; display: flex; gap: 34px; padding: 1px 8px 0 0; }
.caps svg { width: 12px; height: 12px; fill: none; stroke: #888; }
.caps.dark svg { stroke: #000; }
.top { display: flex; flex: none; height: 56px; }
.menubar { flex: 1; display: flex; align-items: center; gap: 18px; padding: 0 14px 0 13px; background: #9cdcdc; border: 2px solid #5c8080; border-left-color: #d5f5f5; border-bottom-color: #d5f5f5; box-shadow: inset 1px 2px #d5f5f5, inset -1px -2px #5c8080; font: bold 14px/18px "Liberation Serif", serif; }
.menubar u { text-underline-offset: 3px; }
.help { margin-left: auto; }
.brand { width: 406px; flex: none; display: flex; overflow: hidden; background: #9cdcdc; border: solid #5c8080; border-width: 2px 0 2px 2px; border-bottom-color: #d5f5f5; padding-left: 5px; }
.logo { margin-top: 9px; overflow: visible; }
.lg { font: italic bold 31px "Liberation Sans", sans-serif; fill: #00007c; }
.prod { display: flex; flex-direction: column; width: 135px; flex: none; align-items: center; white-space: nowrap; font-family: "Liberation Serif", serif; padding-top: 1px; }
.prod b { font-size: 24px; line-height: 28px; }
.prod em { font: italic bold 14px/21px "Liberation Serif", serif; }
.date { flex: none; width: 100px; display: flex; flex-direction: column; padding: 4px 0 0 4px; font: italic bold 15px/15px "Liberation Mono", monospace; white-space: nowrap; }
.tm { padding-left: 14px; }
.date svg { margin: 5px 0 0 70px; }
.work { flex: 1; min-height: 0; display: flex; }
.left { width: 155px; flex: none; display: flex; flex-direction: column; background: #50d0b0; border-left: 1px solid #000; border-top: 1px solid #000; padding: 2px 2px 4px 2px; font: 15px/18px "Liberation Mono", monospace; white-space: nowrap; }
.job { height: 20px; flex: none; border: 1px solid #000; background: #9cdcdc; padding-left: 2px; }
.step { margin-top: -1px; }
.jm { height: 27px; flex: none; margin-top: 2px; border: 1px solid #000; padding: 2px; display: flex; }
.jm button { flex: 1; height: 21px; background: #9cdcdc; border: 2px solid #d5f5f5; border-right-color: #5c8080; border-bottom-color: #5c8080; text-align: left; padding-left: 1px; line-height: 17px; }
.layers { flex: 0 1 557px; margin: 4px 24px 0 -2px; background: #30695c; border-right: 2px solid #b5ecdc; padding: 2px 1px 0 5px; display: flex; min-height: 0; overflow: hidden; }
.list { flex: 1; min-width: 0; background: #50d0b0; border: 1px solid #000; padding: 1px; display: flex; flex-direction: column; gap: 3px; }
.lgrp { background: #000; padding: 1px; }
.layer { display: flex; height: 16px; padding: 1px 0; gap: 1px; }
.layer input { appearance: none; margin: 0; width: 14px; height: 14px; border: 2px solid #fff; outline: 2px solid #000; outline-offset: -4px; background: #fff; flex: none; }
.layer i { width: 15px; flex: none; }
.layer span { flex: 1; min-width: 0; overflow: hidden; padding-left: 1px; font: bold 12px/13px "Liberation Mono", monospace; display: flex; justify-content: space-between; margin: 0 1px; }
.layer span svg { margin: 4px 2px; }
.sbtn { margin-top: auto; height: 21px; flex: none; background: #f0b848; border: 1px solid #000; text-align: left; font: bold 12px/16px "Liberation Serif", serif; padding-left: 3px; }
.canvas { flex: 1; min-width: 0; background: #000; }
.board { width: 100%; height: 100%; }
.cad { font-family: "DejaVu Sans Mono", monospace; font-size: 58px; }
.cad.gold { fill: #ba9600; }
.cad.grn { fill: #449900; }
.cad .big { font-size: 83px; }
.cad .part { font-size: 49px; }
.right { width: 155px; flex: none; display: flex; flex-direction: column; overflow: hidden; background: #000; border-left: 2px solid #30695c; }
.tools { display: grid; grid-template-columns: repeat(4, 38px); gap: 2px; padding: 1px 0; border-top: 2px solid #30695c; }
.tools.edit { border-top: 2px solid #9cd5cc; margin-top: 2px; border-bottom: 2px solid #30695c; }
.tools button { width: 38px; height: 38px; background: #9cdcdc; box-shadow: inset 3px 3px #ccf4f2, inset -3px -3px #5f9595; }
.tools .hot { box-shadow: inset 2px 2px #ccf4f2, inset -2px -2px #5f9595, inset 0 0 0 5px #c01515; }
.tools.edit button { background: #d0d0d0; box-shadow: inset 3px 3px #ececec, inset -3px -3px #858585; }
.tools.edit .w { background: #fff; box-shadow: inset 3px 3px #d8d4d4, inset -3px -3px #8a8686; }
.tools.edit .y { background: #ffc450; box-shadow: inset 3px 3px #ffe0a0, inset -3px -3px #a87c24; }
.tools.edit .on { box-shadow: inset 3px 3px #a87c24, inset -3px -3px #ffe0a0; }
.over { flex: 1; display: flex; align-items: center; padding-top: 4px; }
.coord { height: 48px; flex: none; display: flex; flex-direction: column; justify-content: center; background: #50d0b0; border-top: 2px solid #b5ecdc; border-bottom: 2px solid #b5ecdc; box-shadow: inset 0 2px #30695c; padding: 3px 0 0 2px; font: 15px/15px "Liberation Mono", monospace; white-space: nowrap; }
.cmd { height: 31px; flex: none; display: flex; }
.cmd input { flex: 1; border: 0; background: #ffc; padding: 0; }
.unit { width: 72px; flex: none; background: #50d0b0; border-left: 2px solid #000; padding: 3px 0 2px 6px; overflow: hidden; }
.unit button { height: 26px; width: 74px; border: 2px solid #b5ecdc; border-bottom-color: #30695c; font: bold 15px/20px "Liberation Mono", monospace; text-align: left; padding-left: 4px; display: flex; align-items: center; gap: 8px; }
.unit i { width: 12px; height: 7px; border: 2px solid #b5ecdc; border-right-color: #30695c; border-bottom-color: #30695c; }
.foot { flex: none; height: 14px; border-top: 2px solid #000; background: #b4ffff; box-shadow: inset 0 2px #5c8080, inset 0 3px #000; display: flex; justify-content: flex-end; align-items: flex-end; padding-right: 264px; }

.excel { position: absolute; left: 21px; top: 392px; width: 988px; bottom: 0; display: flex; flex-direction: column; background: #c3d9f5; border: solid #fff; border-width: 0 2px 0 1px; overflow: hidden; font-size: 12px; color: #15428b; font-family: "Noto Sans CJK SC", sans-serif; }
s { display: inline-block; flex: none; width: 0; height: 0; border: 3px solid transparent; border-top-color: #3d5f9c; border-bottom: 0; text-decoration: none; margin: 0 3px; }
s.g { border-top-color: #a9b3c2; }
.xtitle { position: relative; height: 30px; flex: none; background: #fff; display: flex; align-items: center; }
.orb { position: absolute; left: 2px; top: 7px; z-index: 2; }
.qat { margin: 0 0 2px 38px; width: 104px; height: 21px; border: 1px solid #c5c9d2; border-left-color: transparent; border-radius: 0 11px 11px 0; display: flex; align-items: center; gap: 7px; padding-left: 13px; flex: none; }
.qat s { margin: 0; border-top-color: #a0abc0; }
.more { margin-left: 8px; }
h1 { margin: 0; flex: 1; text-align: center; font: 13px/18px "Noto Sans", "Noto Sans CJK SC", sans-serif; color: #000; padding-right: 38px; }
.xtitle .caps { padding-right: 16px; }
.tabs { height: 26px; flex: none; background: #bfdbff; display: flex; align-items: center; gap: 1px; padding-left: 47px; }
.tabs button { height: 25px; line-height: 24px; padding: 0 14px; }
.tabs .act { background: #e3eefb; border-radius: 4px 4px 0 0; box-shadow: 0 0 0 1px #a8c6ee; padding: 0 12px; margin: 1px 2px 0 0; }
.tr { margin-left: auto; display: flex; gap: 13px; align-items: center; padding-right: 5px; font-family: "Liberation Sans", sans-serif; }
.ribbon { flex: none; height: 107px; margin: 0 1px; padding: 2px; display: flex; gap: 3px; border: 1px solid #8db2e3; border-radius: 4px; background: linear-gradient(#dbe6f4, #c9d9ec 20%, #d0dff0 60%, #dff0fb); }
.grp { display: flex; flex-direction: column; flex: none; height: 101px; border: 1px solid #b0cae8; border-radius: 3px; background: linear-gradient(#dce7f4, #c9daee 25%, #d5e3f3); }
.cap { flex: none; height: 19px; line-height: 18px; background: #c1d8f0; color: #3e6aaa; text-align: center; position: relative; }
.cap.lau { padding-right: 20px; }
.cap em { position: absolute; right: 5px; top: 4px; width: 7px; height: 7px; border: solid #8fa9cd; border-width: 1px 0 0 1px; box-shadow: inset -3px -3px #9db4d4; }
.body { flex: 1; display: flex; min-height: 0; }
.clip { width: 73px; } .font { width: 234px; } .align { width: 165px; } .num { width: 136px; } .sty { width: 116px; } .cell { width: 68px; } .ed { width: 125px; }
.tall { display: flex; flex-direction: column; align-items: center; line-height: 17px; padding-top: 5px; }
.tall span { display: block; }
.clip .tall { width: 46px; }
.clip .tall s { margin-top: 5px; }
.clip .tall span { padding-top: 2px; }
.offt { color: #8a8f98; }
.az { font: 14px "Liberation Sans", sans-serif; fill: #7b90b8; }
.stack { display: flex; flex-direction: column; gap: 6px; padding-top: 4px; }
.stack button { display: flex; align-items: center; height: 16px; }
.sm { width: 32px; padding-left: 6px; }
.sm s { margin: 0 0 0 4px; }
.sig { font: bold 15px/16px "Liberation Serif", serif; color: #000; }
.ed .tall { width: 42px; }
.ed .tall s { margin: 0 0 3px 3px; }
.rows { flex-direction: column; gap: 11px; padding: 11px 3px 0 3px; }
.row { display: flex; gap: 3px; height: 24px; align-items: center; }
.row.spread { justify-content: space-between; }
.bx { display: flex; align-items: center; height: 22px; border: 1px solid #a0bbdf; border-radius: 2px; color: #222; flex: none; }
.bx button { display: block; height: 20px; min-width: 22px; text-align: center; }
.bx svg { margin: 0 1px; fill: none; stroke: #7b8eae; overflow: visible; }
.bx svg .ori { stroke: none; fill: #667; font: 10px "Liberation Sans", sans-serif; }
.bx s { margin: 0 4px; }
.align .bx s, .font .bx s { margin: 0 4px 0 2px; }
.bx.gold { background: #f9d48a; border-color: #c29340; }
.end { margin-left: auto; margin-right: 12px; }
select { appearance: none; height: 25px; border: 1px solid #a9c3e4; background: #eaf2fb; font: 12px "Noto Sans CJK SC", sans-serif; padding: 0 2px; color: #000; background-image: linear-gradient(45deg, transparent 50%, #6d86ad 50%), linear-gradient(-45deg, transparent 50%, #6d86ad 50%); background-size: 3px 3px; background-position: right 7px center, right 4px center; background-repeat: no-repeat; }
select.f1 { width: 131px; margin-right: -3px; } select.f2 { width: 47px; } select.f3 { width: 128px; color: #888; background-color: #eee; }
.A1 { font: bold 17px/20px "Liberation Serif", serif; } .A2 { font: bold 14px/20px "Liberation Serif", serif; }
sup { font-size: 8px; line-height: 0; vertical-align: 8px; color: #2b4f9e; }
.bb { font: bold 15px/20px "Liberation Serif", serif; } .it { font-style: italic; } .un { text-decoration: underline; }
.on.bb { background: #fbc268; }
.fc { font: bold 16px/15px "Liberation Serif", serif; color: #2b4f9e; }
.bx .fc { height: 19px; min-width: 16px; margin: 0 3px; border-bottom: 4px solid #f00; }
.wen { color: #8090aa; } .wen span { display: block; font: 8px/9px "Liberation Sans", sans-serif; }
.wen .zi { font: 10px/11px "Noto Sans CJK SC", sans-serif; }
.pc { color: #778; } .dec { font: bold 8px/9px "Liberation Sans", sans-serif; color: #68789a; }
.num .bx button { min-width: 21px; }
.lst { flex-direction: column; gap: 6px; padding: 4px 0 0 5px; }
.lst button { display: flex; align-items: center; gap: 3px; height: 16px; line-height: 16px; color: #8a8f98; }
.lst s { margin: 0 0 0 2px; }
.lst svg { fill: none; stroke: #98a7be; }
.lst .en { color: #15428b; } .lst .en svg { stroke: #4d6488; }
.sec { height: 44px; flex: none; display: flex; padding: 5px 5px 5px 2px; justify-content: space-between; }
.sec > svg { margin-top: 5px; }
.msg { width: 963px; height: 34px; border: 1px solid #a3c0e0; background: linear-gradient(#f4faff, #e0f0fe); display: flex; align-items: center; padding-left: 3px; }
.msg b { margin: 0 12px 0 11px; }
.msg button { margin-left: 10px; width: 70px; height: 21px; border: 1px solid #a3c0e0; background: #fff; }
.fbar { height: 20px; flex: none; display: flex; align-items: center; background: #fff; border: 1px solid #8ba8cf; }
.fbar input { width: 142px; border: 0; padding: 0 6px 0 0; text-align: center; font: 15px/18px "Liberation Serif", serif; }
.blk { border-top-color: #000; }
.fx { width: 76px; height: 18px; margin-left: 8px; background: #c5d9f1; border-right: 1px solid #8ba8cf; border-radius: 10px 0 0 10px; display: flex; align-items: center; gap: 7px; padding-left: 4px; }
.fx i { width: 9px; height: 9px; border-radius: 5px; background: #97a9c6; }
.fx em { font: italic bold 14px/16px "Liberation Serif", serif; color: #333; }
.ftxt { flex: 1; padding-left: 9px; font: 15px/18px "Noto Sans CJK SC", sans-serif; color: #000; white-space: nowrap; }
.spin { width: 15px; height: 18px; background: #8faeda; display: flex; flex-direction: column; justify-content: space-around; align-items: center; }
.spin s { border-width: 5px 4px 0; border-top-color: #46648f; margin: 0; } .spin s:first-child { transform: rotate(180deg); }
.exp { width: 14px; display: flex; justify-content: center; }
.sheet { flex: 1; min-height: 0; margin-top: 4px; display: flex; background: #fff; overflow: hidden; }
table { width: 971px; flex: none; table-layout: fixed; border-collapse: separate; border-spacing: 0; color: #000; align-self: flex-start; }
col.rh { width: 29px; }
th { font: 14px/15px "Liberation Serif", serif; color: #27413e; background: #e4ecf7; border: solid #9eb6ce; border-width: 0 1px 1px 0; padding: 0; vertical-align: bottom; }
thead th { height: 18px; vertical-align: middle; background: linear-gradient(#f9fbfd, #d3dbe9); }
thead .sel { background: #f6c570; border-color: #e98f38; }
tbody .sel { background: #fbd28c; border-color: #e98f38; }
.corner { background: #a9c4e9; }
td { padding: 0 1px; border: solid #d0d7e5; border-width: 0 1px 1px 0; font: 14px/17px "Liberation Serif", "Noto Sans CJK SC", serif; text-align: center; overflow: hidden; white-space: nowrap; }
.h26 { height: 26px; } .h36 { height: 36px; } .h27 { height: 27px; } .h31 { height: 31px; } .h41 { height: 41px; } .h43 { height: 43px; } .h68 { height: 68px; }
.k { border-color: #000; }
.b { font: bold 15px/17px "Liberation Serif", "Noto Sans CJK SC", serif; }
.mn { font: bold 13px/17px "Liberation Mono", monospace; }
.k0 { border-color: #fff; border-bottom-color: #000; }
.title { font: bold 22px/22px "Noto Sans CJK SC", sans-serif; padding-bottom: 3px; }
.bk { border-bottom-color: #000; } .rk { border-right-color: #000; }
.blue { color: #0000e0; }
.yel { background: #ff0; text-align: left; }
.tel { text-align: right; padding-right: 2px; }
.red { font: bold 13px/14px "Liberation Serif", "Noto Sans CJK SC", serif; color: #d81010; text-align: left; padding-left: 2px; }
mark { background: #000; color: #0ff; }
.lnk { text-align: left; vertical-align: top; line-height: 17px; padding-top: 1px; }
.lnk a { color: #6c1a7c; font-size: 16px; }
.sb { flex: 1; display: flex; flex-direction: column; background: #7b9bc9; padding: 1px; }
.sb i { display: flex; justify-content: center; align-items: center; flex: none; }
.split { height: 7px; border: 1px solid #6b88b5; background: #fff; }
.up { height: 17px; } .up s { transform: rotate(180deg); border-width: 5px 4px 0; }
.thumb { height: 205px; background: linear-gradient(90deg, #f4f7fb, #c8d4e8); border: 1px solid #5d7cab; border-radius: 2px; }
.hl { position: absolute; left: 51px; top: 573px; width: 716px; height: 57px; border: 4px solid #ff1; box-shadow: 2px 2px 4px rgba(0, 0, 0, .6), inset 3px 3px 4px rgba(0, 0, 0, .5); pointer-events: none; }
</style>
